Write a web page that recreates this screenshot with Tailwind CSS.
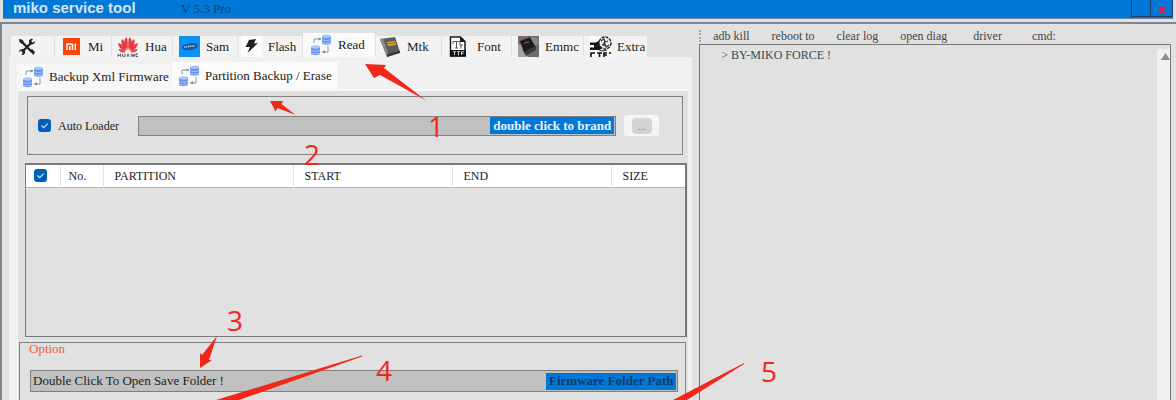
<!DOCTYPE html>
<html lang="en">
<head>
  <meta charset="UTF-8" />
  <meta name="viewport" content="width=device-width, initial-scale=1.0" />
  <title>miko service tool</title>

  <!-- Tailwind CSS -->
  <script src="https://cdn.jsdelivr.net/npm/@tailwindcss/browser@4"></script>
</head>
<body class="relative flex h-screen flex-col overflow-hidden bg-[#e1e1e1] font-['Liberation_Serif',serif] text-[13px] leading-4 text-[#1c1c1c]">

<!-- Shared icons -->
<svg class="hidden">
  <symbol id="icon-db" viewBox="0 0 22 22">
    <rect width="22" height="22" fill="#fafafa"/>
    <path d="M4 9V5h7M18 12v6h-6" fill="none" stroke="#8a94a8" stroke-width="1"/>
    <path d="M8.500 3.500l3 1.500-3 1.500zM15 16l-3 2 3 1.500z" fill="#7f8aa0"/>
    <path d="M12 2v7c0 2.200 9 2.200 9 0V2z" fill="#6495ee"/>
    <ellipse cx="16.500" cy="2.300" rx="4.500" ry="1.700" fill="#a9c5fb"/>
    <path d="M12 5.300c1 1.600 8 1.600 9 0M12 8c1 1.600 8 1.600 9 0" fill="none" stroke="#bcd2fd" stroke-width=".8"/>
    <path d="M1 13v6.500c0 2.200 9 2.200 9 0V13z" fill="#6495ee"/>
    <ellipse cx="5.500" cy="13" rx="4.500" ry="1.700" fill="#a9c5fb"/>
    <path d="M1 16c1 1.600 8 1.600 9 0M1 18.600c1 1.600 8 1.600 9 0" fill="none" stroke="#bcd2fd" stroke-width=".8"/>
  </symbol>
</svg>

<!-- Title bar -->
<header class="mx-[3px] flex h-[19px] shrink-0 border-b border-[#6f8296] bg-[#0078d7]">
  <h1 class="ml-[10px] w-[168px] font-['Liberation_Sans',sans-serif] text-[15px] leading-4 font-bold text-[#d5e6f6]">miko service tool</h1>
  <span class="pt-px text-[#15406b]">V 5.3 Pro</span>
  <button aria-label="Minimize" class="ml-auto h-[17px] w-5 border-x border-b border-[#16406b]"></button>
  <button aria-label="Close" class="flex h-[17px] w-[22px] items-center justify-center border-r border-b border-[#16406b] pt-1">
    <svg class="h-2 w-2" viewBox="0 0 8 8"><path d="M1 .5l5.500 7M7 .5l-5.500 7" stroke="#e81c34" stroke-width="2.200"/></svg>
  </button>
</header>

<main class="mt-[3px] flex min-h-0 flex-1 border-t-2 border-l-2 border-[#7d8590]">

  <!-- Left side: tool tabs -->
  <div class="ml-[7px] flex w-[58.200%] shrink-0 flex-col pt-[9px]">
    <nav class="flex h-6 shrink-0 items-end gap-px pl-0.5">
      <button aria-label="Tools" class="flex h-[21px] w-[43px] items-center bg-[#f3f3f3] pl-[7px]">
        <svg class="h-[18px] w-[18px]" viewBox="0 0 18 18">
          <path d="M3 3l11 11M14 4L4 14" stroke="#222" stroke-width="2.400"/>
          <path d="M1 1l3 .5L6 4 4 6 1.500 4zM12 13l2-2 3 3-1.500 3z" fill="#222"/>
          <path d="M17 3l-2.500 2-1.500-1.500L15 1c-3-.8-4.500 1.500-4 3.500l2 2c2 .3 4.300-1 4-3.500zM1 14l2.500-1.500L5 14l-1.500 3c3 .5 4-2 3.500-4l-1.500-2C3 10.500.8 12 1 14z" fill="#222"/>
        </svg>
      </button>
      <button class="flex h-[21px] w-[56px] items-center gap-2 bg-[#f3f3f3] pl-2">
        <svg class="h-[17px] w-[17px]" viewBox="0 0 17 17">
          <rect width="17" height="17" fill="#f8450a"/>
          <path d="M4 12V6h4q1.500 0 1.500 1.500V12M6.800 8v4M12.300 5.500V12" fill="none" stroke="#fff" stroke-width="1.500"/>
        </svg>Mi
      </button>
      <button class="flex h-[21px] w-[60px] items-center gap-1.5 bg-[#f3f3f3] pl-[5px]">
        <svg class="h-[22px] w-[22px]" viewBox="0 0 22 22">
          <g fill="#e5383f">
            <path d="M10.500 14C6.500 8 7 3 9.500 1c1.500 3 1.500 8 1 13zM11.500 14c4-6 3.500-11 1-13-1.500 3-1.500 8-1 13z"/>
            <path d="M9.500 14.500C5 11 3.500 6 5 3c3 2 4.500 6.500 4.500 11.500zM12.500 14.500C17 11 18.500 6 17 3c-3 2-4.500 6.500-4.500 11.500z"/>
            <path d="M9 15.300C4 14 .8 10.500 1.500 7 5 8 8 11.500 9 15.300zM13 15.300c5-1.300 8.200-4.800 7.500-8.300-3.500 1-6.500 4.500-7.500 8.300z"/>
            <path d="M8.500 16.300c-3.500 1-6.500-.8-7-3.300 3 0 5.500 1.300 7 3.300zM13.500 16.300c3.500 1 6.500-.8 7-3.300-3 0-5.500 1.300-7 3.300z"/>
          </g>
          <path d="M1 17.800v3M3.500 17.800v3M1 19.300h2.500M5.500 17.800v2.500h2.500v-2.500M10 20.800l1-3 1.300 3M14 17.800l1 3 1-2.500 1 2.500.8-3M21 17.800h-2v2.700h2" fill="none" stroke="#555" stroke-width=".9"/>
        </svg>Hua
      </button>
      <button class="flex h-[21px] w-[64px] items-center gap-1.5 bg-[#f3f3f3] pl-1.5">
        <svg class="h-[21px] w-[21px]" viewBox="0 0 21 21">
          <rect width="21" height="21" fill="#0b90f5"/>
          <path d="M3 11.500C3 8.500 10 6.800 18 7.500c1.500 3-1 6-7 6.500-4.500.3-8-.5-8-2.500z" fill="#155a9c"/>
          <path d="M5 11.200l11-1.500" stroke="#a8cdee" stroke-width="1.300" stroke-dasharray="1.400 .5"/>
        </svg>Sam
      </button>
      <button class="flex h-[21px] w-[64px] items-center gap-1.5 bg-[#f3f3f3] pl-[3px]">
        <svg class="h-[21px] w-[21px]" viewBox="0 0 21 21">
          <rect width="21" height="21" fill="#fcfcfc"/>
          <path d="M8 4l7-1-2 4.500 4-.5L6.500 17l2.500-6H4.500z" fill="#202020"/>
        </svg>Flash
      </button>
      <button class="flex h-6 w-[72px] items-center gap-1.5 bg-[#fafafa] pl-[7px]">
        <svg class="h-[22px] w-[22px]"><use href="#icon-db"/></svg>Read
      </button>
      <button class="flex h-[21px] w-[65px] items-center gap-1.5 bg-[#f3f3f3] pl-1">
        <svg class="h-[21px] w-[21px]" viewBox="0 0 21 21">
          <path d="M0 3l15-2 5 15-13 5z" fill="#5b5b5b"/>
          <path d="M0 3l3-.4L9 20l-2 1z" fill="#8d8d8d"/>
          <path d="M7 18l13-3v2L7 21z" fill="#373737"/>
          <path d="M7 6l8-1 1 4-8 1z" fill="#e9a52d"/>
          <path d="M8 7.800l7-1" stroke="#9c5b13" stroke-width="1"/>
        </svg>Mtk
      </button>
      <button class="flex h-[21px] w-[69px] items-center gap-2.5 bg-[#f3f3f3] pl-[7px]">
        <svg class="h-[21px] w-[18px]" viewBox="0 0 18 21">
          <path d="M1.500 1h10l4.500 4.500V20h-14.500z" fill="#fff" stroke="#1c1c1c" stroke-width="1.500"/>
          <path d="M11 1v5h5" fill="#1c1c1c"/>
          <path d="M4 8V5.500h7V8M7.500 5.500V12M6 12h3M10 9h4M12 9v3.500" fill="none" stroke="#555" stroke-width="1"/>
          <path d="M1 14h16v6.500H1z" fill="#141414"/>
          <path d="M4 15.700h3M5.500 15.700v3.500M8 15.700h3M9.500 15.700v3.500M12.500 19v-3.300h2.500M12.500 17.300h2" fill="none" stroke="#ddd" stroke-width=".9"/>
        </svg>Font
      </button>
      <button class="flex h-[21px] w-[71px] items-center gap-1.5 bg-[#f3f3f3] pl-1.5">
        <svg class="h-[21px] w-[21px]" viewBox="0 0 21 21">
          <rect width="21" height="21" fill="#6e6e6e"/>
          <path d="M0 8l6 2 4 11H0z" fill="#a3a3a3"/>
          <path d="M2 5l11-4 5 9-12 7z" fill="#1d1b1d"/>
          <path d="M12 1l7 1 2 6-4 2z" fill="#8c8c8c"/>
          <path d="M6 16l12-6v4L8 20z" fill="#3b3b3b"/>
          <path d="M6 7.500l5-2" stroke="#b34a4a" stroke-width="1.300"/>
        </svg>Emmc
      </button>
      <button class="flex h-[21px] w-[63px] items-center gap-[5px] bg-[#f3f3f3] pl-1.5">
        <svg class="h-[21px] w-[22px]" viewBox="0 0 22 21">
          <rect width="22" height="21" fill="#fafafa"/>
          <path d="M0 6.500h6l3-2 3 2v6l-3 1.500H0v-2.500h4V9H0z" fill="#161616"/>
          <circle cx="15" cy="7" r="6" fill="#ececec" stroke="#2b2b2b" stroke-width="1.500" stroke-dasharray="3 1"/>
          <path d="M11 5l3-2 1 3 3-1M12 9l3-1 1 3 3-2M14 6v4M9 14l4 1 4-1" fill="none" stroke="#333" stroke-width="1.200"/>
          <path d="M5 17H1v4M7 17h5M9.500 17v4M17 17h-3v4M14 19h3M20 16v2" fill="none" stroke="#111" stroke-width="1.600"/>
        </svg>Extra
      </button>
    </nav>

    <div class="flex min-h-0 flex-1 flex-col bg-[#f1f1f1] pt-[5px] pr-1 pl-2">
      <!-- Sub tabs -->
      <nav class="flex h-[27px] shrink-0 items-end gap-px">
        <button class="flex h-[25px] w-[154px] items-center gap-[5px] bg-[#f6f6f6] pl-[5px] whitespace-nowrap">
          <svg class="h-[22px] w-[22px] shrink-0"><use href="#icon-db"/></svg>Backup Xml Firmware
        </button>
        <button class="flex h-[27px] w-[166px] items-center gap-[5px] bg-[#fbfbfb] pl-1.5 whitespace-nowrap">
          <svg class="h-[22px] w-[22px] shrink-0"><use href="#icon-db"/></svg>Partition Backup / Erase
        </button>
      </nav>

      <section class="flex min-h-0 flex-1 flex-col border-t-2 border-l border-[#fafafa] bg-[#e1e1e1] pt-[5px]">
        <!-- Loader -->
        <div class="mr-[5px] ml-[9px] flex h-[59px] shrink-0 items-center border border-[#808080] pl-[10px]">
          <label class="flex w-[100px] items-center gap-[7px] text-[12px] whitespace-nowrap">
            <span class="relative flex">
              <input type="checkbox" checked class="h-[13px] w-[13px] appearance-none rounded-[3px] bg-[#0060b8]" />
              <svg class="pointer-events-none absolute h-[13px] w-[13px]" viewBox="0 0 13 13"><path d="M3.500 6.500l2.200 2.200 4-4" fill="none" stroke="#c9e2f7" stroke-width="1.200"/></svg>
            </span>
            Auto Loader
          </label>
          <div class="flex h-5 flex-1 items-center border border-[#808080] bg-[#c0c0c0] pr-px">
            <input type="text" aria-label="Loader file" class="min-w-0 flex-1 outline-none" />
            <button class="h-[17px] w-[124px] bg-[#0078d7] font-bold whitespace-nowrap text-[#eaf3fc]">double click to brand</button>
          </div>
          <button aria-label="Browse" class="mr-[23px] ml-2 flex h-[21px] w-[35px] items-center justify-center rounded-[3px] bg-[#f5f5f5]">
            <span class="h-4 w-5 rounded-sm bg-[#d4d4d4] text-[11px] leading-4 text-[#777]">...</span>
          </button>
        </div>

        <!-- Partition list -->
        <div class="mt-2 mr-px ml-[7px] h-[174px] shrink-0 border border-t-2 border-r-2 border-[#7a7a7a]">
          <table class="w-full table-fixed text-[12px]">
            <thead>
              <tr class="h-[22px] border-b border-[#b8b8b8] bg-white text-left">
                <th class="w-[34px] border-r border-[#e4e4e4] pl-2">
                  <span class="relative flex">
                    <input type="checkbox" checked aria-label="Select all" class="h-[13px] w-[13px] appearance-none rounded-[3px] bg-[#0060b8]" />
                    <svg class="pointer-events-none absolute h-[13px] w-[13px]" viewBox="0 0 13 13"><path d="M3.500 6.500l2.200 2.200 4-4" fill="none" stroke="#c9e2f7" stroke-width="1.200"/></svg>
                  </span>
                </th>
                <th class="w-[43px] border-r border-[#e4e4e4] pl-2 font-normal">No.</th>
                <th class="w-[190px] border-r border-[#e4e4e4] pl-[11px] font-normal">PARTITION</th>
                <th class="w-[159px] border-r border-[#e4e4e4] pl-[11px] font-normal">START</th>
                <th class="w-[159px] border-r border-[#e4e4e4] pl-[11px] font-normal">END</th>
                <th class="pl-[11px] font-normal">SIZE</th>
              </tr>
            </thead>
          </table>
        </div>

        <!-- Option -->
        <div class="mt-[5px] mr-0.5 ml-px flex-1 border border-b-0 border-[#808080]">
          <h2 class="ml-[9px] leading-3 text-[#f2603a]">Option</h2>
          <div class="mt-[15px] mr-[7px] ml-[10px] flex h-[22px] items-center border border-[#808080] bg-[#c0c0c0] pr-px">
            <input type="text" aria-label="Save folder" value="Double Click To Open Save Folder !" class="min-w-0 flex-1 pl-0.5 outline-none" />
            <button class="h-[17px] w-[130px] bg-[#0078d7] font-bold whitespace-nowrap text-[#123a66]">Firmware Folder Path</button>
          </div>
        </div>
      </section>
    </div>
  </div>

  <!-- Right side: log -->
  <div class="mr-[5px] ml-[7px] flex min-w-0 flex-1 flex-col pt-[3px] text-[12px]">
    <nav class="flex h-[17px] shrink-0 items-center gap-[22px] text-[#444] whitespace-nowrap">
      <span class="-mr-[10px] h-3 w-0.5 border-l-2 border-dotted border-[#aaa]"></span>
      <button>adb kill</button>
      <button>reboot to</button>
      <button>clear log</button>
      <button>open diag</button>
      <button class="ml-1">driver</button>
      <button class="ml-2">cmd:</button>
    </nav>
    <div class="flex min-h-0 flex-1 justify-between border border-b-0 border-[#777]">
      <p class="pt-0.5 pl-[21px] text-[#2f4f4f]">&gt; BY-MIKO FORCE !</p>
      <div class="mt-1 w-[13px] bg-[#f0f0f0] pt-1 pl-1">
        <svg class="h-[7px] w-[9px]" viewBox="0 0 9 7"><path d="M4.500 0L9 7H0z" fill="#8a8a8a"/></svg>
      </div>
    </div>
  </div>
</main>

<!-- Step markers drawn over the window -->
<svg class="pointer-events-none absolute top-0 left-0 h-[400px] w-[1176px]" viewBox="0 0 1176 400" fill="#f0281a">
  <path d="M365 64l21 1-2 3 42 32.500-46-25.500-6 3z"/>
  <path d="M270 101l13 0-1.500 3 14 11-18-7-2 3.500z"/>
  <path d="M217 336l-8 24 3 0-12 8 0-15 2 2z"/>
  <path d="M362 355.500L216 400h23L362 356.500z"/>
  <path d="M744 363L673 400h14L744 364z"/>
</svg>
<div class="pointer-events-none font-['Open_Sans',sans-serif] text-[28px] leading-8 text-[#f0281a]">
  <span class="absolute top-[110px] left-[428px]">1</span>
  <span class="absolute top-[138px] left-[304px]">2</span>
  <span class="absolute top-[304px] left-[227px]">3</span>
  <span class="absolute top-[354px] left-[376px]">4</span>
  <span class="absolute top-[355px] left-[761px]">5</span>
</div>

</body>
</html>
